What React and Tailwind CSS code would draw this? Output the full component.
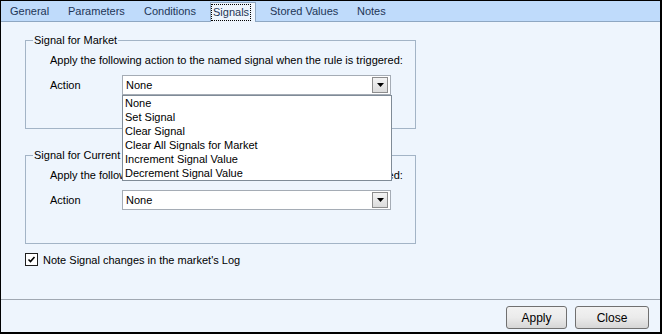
import React from "react";

const tabs = [
  { label: "General", w: "w-[58px]", pl: "pl-[8px]" },
  { label: "Parameters", w: "w-[76px]", pl: "pl-[8px]" },
  { label: "Conditions", w: "w-[74px]", pl: "pl-[8px]" },
  { label: "Signals", w: "w-[46px]", pl: "pl-[1px]", active: true },
  { label: "Stored Values", w: "w-[93px]", pl: "pl-[14px]" },
  { label: "Notes", w: "w-[50px]", pl: "pl-[8px]" },
];

const actions = [
  "None",
  "Set Signal",
  "Clear Signal",
  "Clear All Signals for Market",
  "Increment Signal Value",
  "Decrement Signal Value",
];

const ComboBox = ({ open }) => {
  return (
    <div className="relative w-[269px] h-[20px] bg-white border border-[#a5acb5] flex items-center">
      <span className="flex-1 pl-[3px] leading-[14px]">None</span>
      <div className="w-[16px] h-[16px] mr-[2px] border border-[#8d8d8d] bg-gradient-to-b from-[#f4f4f4] to-[#dcdcdc] flex items-center justify-center">
        <svg width="7" height="4" viewBox="0 0 7 4">
          <path d="M0 0H7L3.5 4Z" fill="#000" />
        </svg>
      </div>
      {open && (
        // the open dropdown list lies over the group box below
        <div className="absolute left-[-1px] top-[19px] w-[270px] bg-white border border-[#7f8b97] z-10">
          {actions.map((a, i) => (
            <div className="h-[14px] leading-[14px] pl-[2px]" key={i}>
              {a}
            </div>
          ))}
        </div>
      )}
    </div>
  );
};

const SignalGroup = ({ title, open, className }) => {
  return (
    <fieldset
      className={`w-[391px] border border-[#a3b4c6] pt-[6px] pb-[33px] ${className}`}
    >
      <legend className="ml-[7px] px-[1px] leading-[14px] h-[14px]">
        {title}
      </legend>
      <div className="pl-[24px]">
        <div className="leading-[14px] h-[14px]">
          Apply the following action to the named signal when the rule is
          triggered:
        </div>
        <div className="flex items-center mt-[8px]">
          <span className="w-[72px] leading-[14px]">Action</span>
          <ComboBox open={open} />
        </div>
      </div>
    </fieldset>
  );
};

export default function App() {
  return (
    <div className="w-[662px] h-[334px] bg-[#eef5fd] border-l border-t border-r-2 border-b-2 border-black flex flex-col text-[11px] text-black font-['Liberation_Sans',Arial,sans-serif] overflow-hidden">
      <div className="h-[21px] bg-[#bfdbfb] border-b border-[#8ea7c2] flex items-end pl-[1px] shrink-0">
        {tabs.map((t) =>
          t.active ? (
            <div
              key={t.label}
              className={`${t.w} h-[20px] -mb-px bg-[#eef5fd] border-l border-r border-t border-[#8ea7c2] flex items-center ${t.pl} relative`}
            >
              <span className="outline-1 outline-dotted outline-black px-[1px] leading-[15px] text-[#1d3556]">
                {t.label}
              </span>
            </div>
          ) : (
            <div
              key={t.label}
              className={`${t.w} h-[20px] flex items-center ${t.pl} text-[#1d3556]`}
            >
              {t.label}
            </div>
          )
        )}
      </div>

      <div className="flex-1 pl-[24px] pt-[11px] flex flex-col">
        <SignalGroup title="Signal for Market" open />
        <SignalGroup title="Signal for Current Selection" className="mt-[19px]" />
        <label className="flex items-center mt-[9px] h-[13px]">
          <span className="w-[13px] h-[13px] bg-white border border-[#1e1e1e] flex items-center justify-center">
            <svg width="9" height="9" viewBox="0 0 9 9">
              <path d="M1.5 4.5L3.5 6.5L7.5 2" stroke="#000" strokeWidth="1.6" fill="none" />
            </svg>
          </span>
          <span className="ml-[5px] leading-[14px]">
            Note Signal changes in the market's Log
          </span>
        </label>
      </div>

      <div className="h-[33px] border-t border-[#a0a8b2] flex justify-end items-start pt-[6px] pr-[11px] gap-[8px] shrink-0">
        <button className="w-[61px] h-[23px] rounded-[3px] border border-[#707070] bg-gradient-to-b from-[#f2f2f2] via-[#ebebeb] to-[#d6d6d6] text-[12px] text-black">
          Apply
        </button>
        <button className="w-[74px] h-[23px] rounded-[3px] border border-[#707070] bg-gradient-to-b from-[#f2f2f2] via-[#ebebeb] to-[#d6d6d6] text-[12px] text-black">
          Close
        </button>
      </div>
    </div>
  );
}
